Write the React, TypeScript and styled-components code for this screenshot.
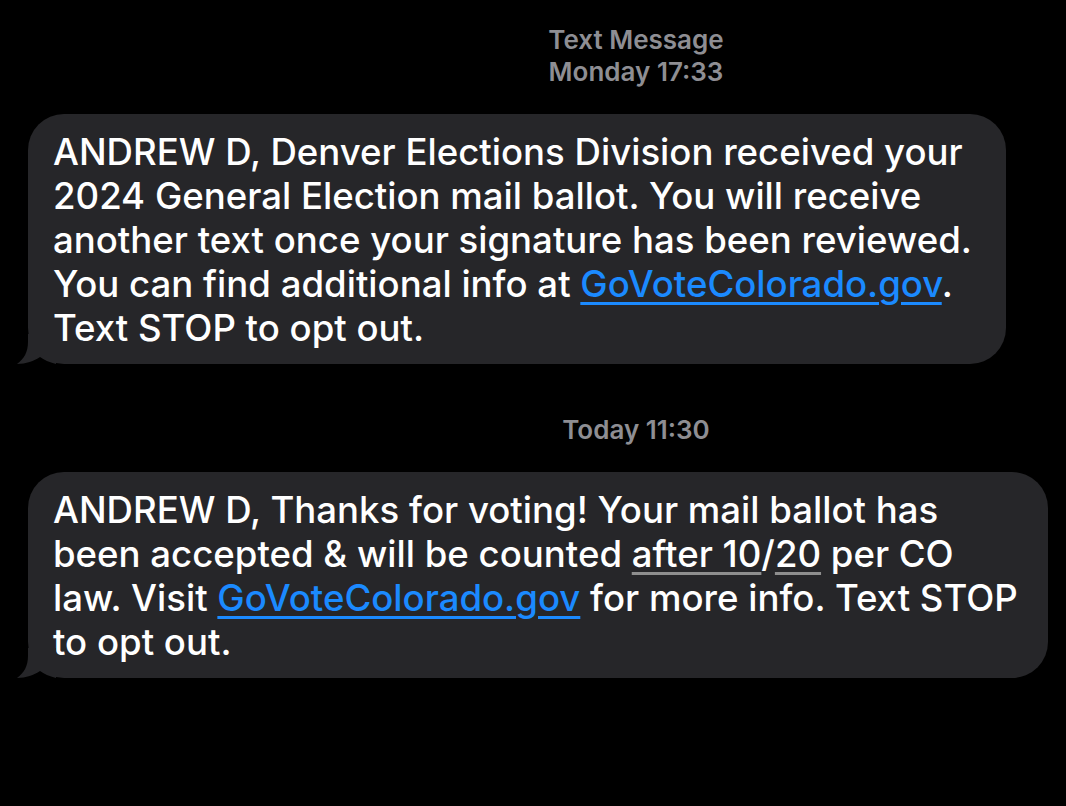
import styled, { createGlobalStyle } from "styled-components"

const GlobalStyle = createGlobalStyle`
    html, body {
        margin: 0;
        padding: 0;
        background: #000;
    }
    body {
        width: 1066px;
        height: 806px;
        overflow: hidden;
        font-family: 'Inter', 'Liberation Sans', sans-serif;
    }
`

const Thread = styled.div`
    display: flex;
    flex-direction: column;
    padding: 24px 0 0 0;
`

const Stamp = styled.div<{ $gapTop?: number }>`
    margin-top: ${p => p.$gapTop ?? 0}px;
    padding-left: 206px;
    text-align: center;
    color: #8e8e93;
    font-size: 26px;
    font-weight: 600;
    line-height: 32px;
`

const Bubble = styled.div<{ $width: number }>`
    position: relative;
    box-sizing: border-box;
    width: ${p => p.$width}px;
    margin: 26px 0 0 28px;
    padding: 16px 0 14px 25px;
    background: #262629;
    border-radius: 36px;
    color: #fff;
    font-size: 36.6px;
    font-weight: 500;
    line-height: 44px;
    white-space: nowrap;
`

const Tail = styled.svg`
    position: absolute;
    left: -12px;
    bottom: 0;
`

const Link = styled.span`
    color: #1b8aff;
    text-decoration: underline;
    text-decoration-thickness: 3px;
    text-underline-offset: 5px;
`

const DateLink = styled.span`
    text-decoration: underline;
    text-decoration-color: #8e8e8e;
    text-decoration-thickness: 3px;
    text-underline-offset: 5px;
`

function BubbleTail() {
    return (
        <Tail width="40" height="30" viewBox="0 0 40 30">
            <path d="M12 0 L12 8 C12 18 8 25 1 30 C10 30 18 27 24 23 C28 26 33 28 40 30 L40 0 Z" fill="#262629" />
        </Tail>
    )
}

export default function App() {
    return (
        <>
            <GlobalStyle />
            <Thread>
                <Stamp>
                    Text Message<br />Monday 17:33
                </Stamp>
                <Bubble $width={978}>
                    ANDREW D, Denver Elections Division received your<br />
                    2024 General Election mail ballot. You will receive<br />
                    another text once your signature has been reviewed.<br />
                    You can find additional info at <Link>GoVoteColorado.gov</Link>.<br />
                    Text STOP to opt out.
                    <BubbleTail />
                </Bubble>
                <Stamp $gapTop={50}>Today 11:30</Stamp>
                <Bubble $width={1020}>
                    ANDREW D, Thanks for voting! Your mail ballot has<br />
                    been accepted &amp; will be counted <DateLink>after 10</DateLink>/<DateLink>20</DateLink> per CO<br />
                    law. Visit <Link>GoVoteColorado.gov</Link> for more info. Text STOP<br />
                    to opt out.
                    <BubbleTail />
                </Bubble>
            </Thread>
        </>
    )
}
